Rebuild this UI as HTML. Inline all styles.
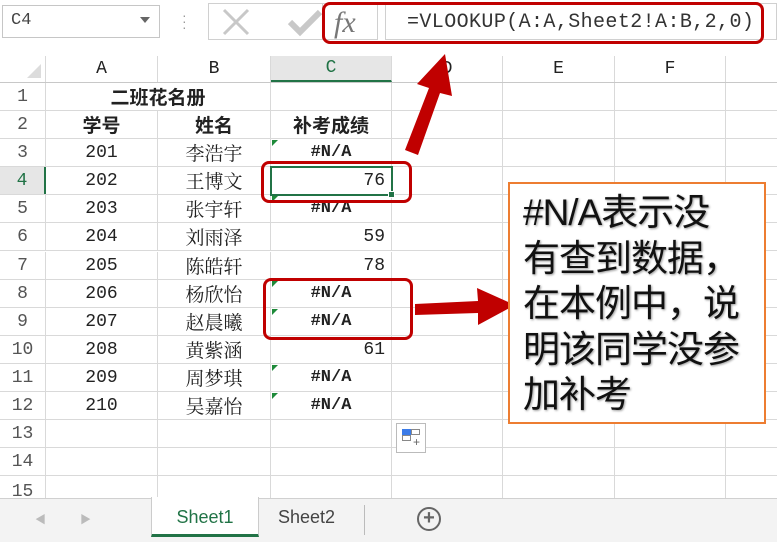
<!DOCTYPE html>
<html><head><meta charset="utf-8"><style>
*{margin:0;padding:0;box-sizing:border-box}
body{width:777px;height:542px;overflow:hidden;background:#fff;position:relative;font-family:"Liberation Sans","Noto Sans CJK SC",sans-serif}
.a{position:absolute}
.row{position:absolute;left:0;width:900px;height:28px;border-bottom:1px solid #d9d9d9;display:flex}
.row div{flex-shrink:0;height:100%;border-right:1px solid #d9d9d9;display:flex;align-items:center;justify-content:center;font-family:"Liberation Mono","Noto Serif CJK SC",serif;font-size:18px;color:#222;position:relative}
.c0{width:46px;color:#555!important;justify-content:center}
.c1{width:112px}.c2{width:113px}.c3{width:121px}.c4{width:111px}.c5{width:112px}.c6{width:111px}.c7{width:160px;border-right:none!important}
.r{justify-content:flex-end!important;padding-right:6px}
.na{font-weight:bold;font-size:17px!important}
.na::before{content:"";position:absolute;left:1px;top:1px;border-top:6px solid #1e8a3a;border-right:6px solid transparent}
.b{font-family:"Noto Sans CJK SC",sans-serif!important;font-weight:bold;font-size:19px!important}
.nm{font-family:"Noto Serif CJK SC",serif!important;font-size:19px!important}
.red{position:absolute;border:3px solid #c00000;border-radius:8px}
</style></head><body>
<!-- formula bar -->
<div class="a" style="left:2px;top:5px;width:158px;height:33px;border:1px solid #c6c6c6;font-family:'Liberation Mono',monospace;font-size:17px;color:#444;padding:5px 8px">C4</div>
<div class="a" style="left:140px;top:17px;border-top:6px solid #666;border-left:5px solid transparent;border-right:5px solid transparent"></div>
<div class="a" style="left:182px;top:12px;color:#999;font-size:14px;line-height:6px">·<br>·<br>·</div>
<div class="a" style="left:208px;top:3px;width:170px;height:37px;border:1px solid #d0d0d0"></div>
<svg class="a" style="left:220px;top:8px" width="110" height="30"><path d="M4 2 L28 26 M28 2 L4 26" stroke="#c8c8c8" stroke-width="3"/><path d="M70 14 L80 24 L100 4" stroke="#c8c8c8" stroke-width="6" fill="none"/></svg>
<div class="a" style="left:322px;top:3px;width:56px;height:37px;border-left:1px solid #d0d0d0"></div>
<div class="a" style="left:334px;top:6px;font-family:'Liberation Serif',serif;font-style:italic;font-size:30px;color:#777">fx</div>
<div class="a" style="left:385px;top:3px;width:392px;height:37px;border:1px solid #d0d0d0"></div>
<div class="a" style="left:407px;top:11px;font-family:'Liberation Mono',monospace;font-size:20px;letter-spacing:0.4px;color:#333">=VLOOKUP(A:A,Sheet2!A:B,2,0)</div>
<div class="red" style="left:322px;top:2px;width:442px;height:42px"></div>
<!-- column header -->
<div class="row" style="top:56px;height:27px;border-bottom:1px solid #c8c8c8">
<div class="c0" style="justify-content:flex-end;align-items:flex-end;padding:0 4px 4px 0"><span style="border-bottom:14px solid #dcdcdc;border-left:14px solid transparent"></span></div>
<div class="c1">A</div><div class="c2">B</div><div class="c3" style="background:#e6e6e6;color:#217346;border-bottom:2px solid #217346">C</div><div class="c4">D</div><div class="c5">E</div><div class="c6">F</div><div class="c7"></div></div>
<div class="row" style="top:83px"><div class="c0">1</div><div class="b" style="width:225px">二班花名册</div><div class="c3"></div><div class="c4"></div><div class="c5"></div><div class="c6"></div><div class="c7"></div></div>
<div class="row" style="top:111px"><div class="c0">2</div><div class="c1 b">学号</div><div class="c2 b">姓名</div><div class="c3 b">补考成绩</div><div class="c4"></div><div class="c5"></div><div class="c6"></div><div class="c7"></div></div>
<div class="row" style="top:139px"><div class="c0">3</div><div class="c1">201</div><div class="c2 nm">李浩宇</div><div class="c3 na">#N/A</div><div class="c4"></div><div class="c5"></div><div class="c6"></div><div class="c7"></div></div>
<div class="row" style="top:167px"><div class="c0" style="background:#e6e6e6;color:#217346!important;border-right:2px solid #217346">4</div><div class="c1">202</div><div class="c2 nm">王博文</div><div class="c3 r">76</div><div class="c4"></div><div class="c5"></div><div class="c6"></div><div class="c7"></div></div>
<div class="row" style="top:195px"><div class="c0">5</div><div class="c1">203</div><div class="c2 nm">张宇轩</div><div class="c3 na">#N/A</div><div class="c4"></div><div class="c5"></div><div class="c6"></div><div class="c7"></div></div>
<div class="row" style="top:223px"><div class="c0">6</div><div class="c1">204</div><div class="c2 nm">刘雨泽</div><div class="c3 r">59</div><div class="c4"></div><div class="c5"></div><div class="c6"></div><div class="c7"></div></div>
<div class="row" style="top:252px"><div class="c0">7</div><div class="c1">205</div><div class="c2 nm">陈皓轩</div><div class="c3 r">78</div><div class="c4"></div><div class="c5"></div><div class="c6"></div><div class="c7"></div></div>
<div class="row" style="top:280px"><div class="c0">8</div><div class="c1">206</div><div class="c2 nm">杨欣怡</div><div class="c3 na">#N/A</div><div class="c4"></div><div class="c5"></div><div class="c6"></div><div class="c7"></div></div>
<div class="row" style="top:308px"><div class="c0">9</div><div class="c1">207</div><div class="c2 nm">赵晨曦</div><div class="c3 na">#N/A</div><div class="c4"></div><div class="c5"></div><div class="c6"></div><div class="c7"></div></div>
<div class="row" style="top:336px"><div class="c0">10</div><div class="c1">208</div><div class="c2 nm">黄紫涵</div><div class="c3 r">61</div><div class="c4"></div><div class="c5"></div><div class="c6"></div><div class="c7"></div></div>
<div class="row" style="top:364px"><div class="c0">11</div><div class="c1">209</div><div class="c2 nm">周梦琪</div><div class="c3 na">#N/A</div><div class="c4"></div><div class="c5"></div><div class="c6"></div><div class="c7"></div></div>
<div class="row" style="top:392px"><div class="c0">12</div><div class="c1">210</div><div class="c2 nm">吴嘉怡</div><div class="c3 na">#N/A</div><div class="c4"></div><div class="c5"></div><div class="c6"></div><div class="c7"></div></div>
<div class="row" style="top:420px"><div class="c0">13</div><div class="c1"></div><div class="c2"></div><div class="c3"></div><div class="c4"></div><div class="c5"></div><div class="c6"></div><div class="c7"></div></div>
<div class="row" style="top:448px"><div class="c0">14</div><div class="c1"></div><div class="c2"></div><div class="c3"></div><div class="c4"></div><div class="c5"></div><div class="c6"></div><div class="c7"></div></div>
<div class="row" style="top:476px"><div class="c0" style="align-items:flex-start;padding-top:6px">15</div><div class="c1"></div><div class="c2"></div><div class="c3"></div><div class="c4"></div><div class="c5"></div><div class="c6"></div><div class="c7"></div></div>
<!-- selection -->
<div class="a" style="left:270px;top:166px;width:123px;height:30px;border:2px solid #217346"></div>
<div class="a" style="left:388px;top:191px;width:7px;height:7px;background:#217346;border:1px solid #fff"></div>
<!-- paste icon -->
<div class="a" style="left:396px;top:423px;width:30px;height:30px;border:1px solid #bbb;background:#fff">
<div class="a" style="left:5px;top:5px;width:9px;height:6px;background:#3b7be8"></div>
<div class="a" style="left:14px;top:5px;width:9px;height:6px;border:1px solid #888"></div>
<div class="a" style="left:5px;top:11px;width:9px;height:6px;border:1px solid #888"></div>
<div class="a" style="left:16px;top:11px;font-size:12px;color:#666">+</div>
</div>
<!-- tabs -->
<div class="a" style="left:0;top:498px;width:777px;height:44px;background:#f3f3f3;border-top:1px solid #d0d0d0"></div>
<div class="a" style="left:35px;top:511px;font-size:11px;color:#bbb">◀</div>
<div class="a" style="left:80px;top:511px;font-size:11px;color:#bbb">▶</div>
<div class="a" style="left:151px;top:497px;width:108px;height:40px;background:#fff;border:1px solid #ccc;border-top:none;border-bottom:3px solid #217346;text-align:center;font-size:18px;color:#217346;padding-top:10px">Sheet1</div>
<div class="a" style="left:278px;top:507px;font-size:18px;color:#444">Sheet2</div>
<div class="a" style="left:364px;top:505px;width:1px;height:30px;background:#bbb"></div>
<div class="a" style="left:417px;top:507px;width:24px;height:24px;border:2px solid #666;border-radius:50%;text-align:center;line-height:19px;font-size:20px;color:#666;font-weight:bold">+</div>
<!-- annotations -->
<div class="red" style="left:261px;top:161px;width:151px;height:42px"></div>
<div class="red" style="left:263px;top:278px;width:150px;height:62px"></div>
<svg class="a" style="left:0;top:0" width="777" height="542">
<polygon points="405,150 418,155 440,93 452,96 445,54 417,84 429,88" fill="#c00000"/>
<polygon points="415,304 478,301 477,288 515,305 478,325 478,313 415,315" fill="#c00000"/>
</svg>
<div class="a" style="left:508px;top:182px;width:258px;height:242px;border:2px solid #ed7d31;background:#fff;padding:6px 0 0 13px;font-family:'Liberation Sans','Noto Sans CJK SC',sans-serif;font-size:37px;line-height:45.5px;color:#111;text-shadow:1px 1px 2px #999;letter-spacing:-1px">#N/A表示没<br>有查到数据，<br>在本例中，说<br>明该同学没参<br>加补考</div>
</body></html>
